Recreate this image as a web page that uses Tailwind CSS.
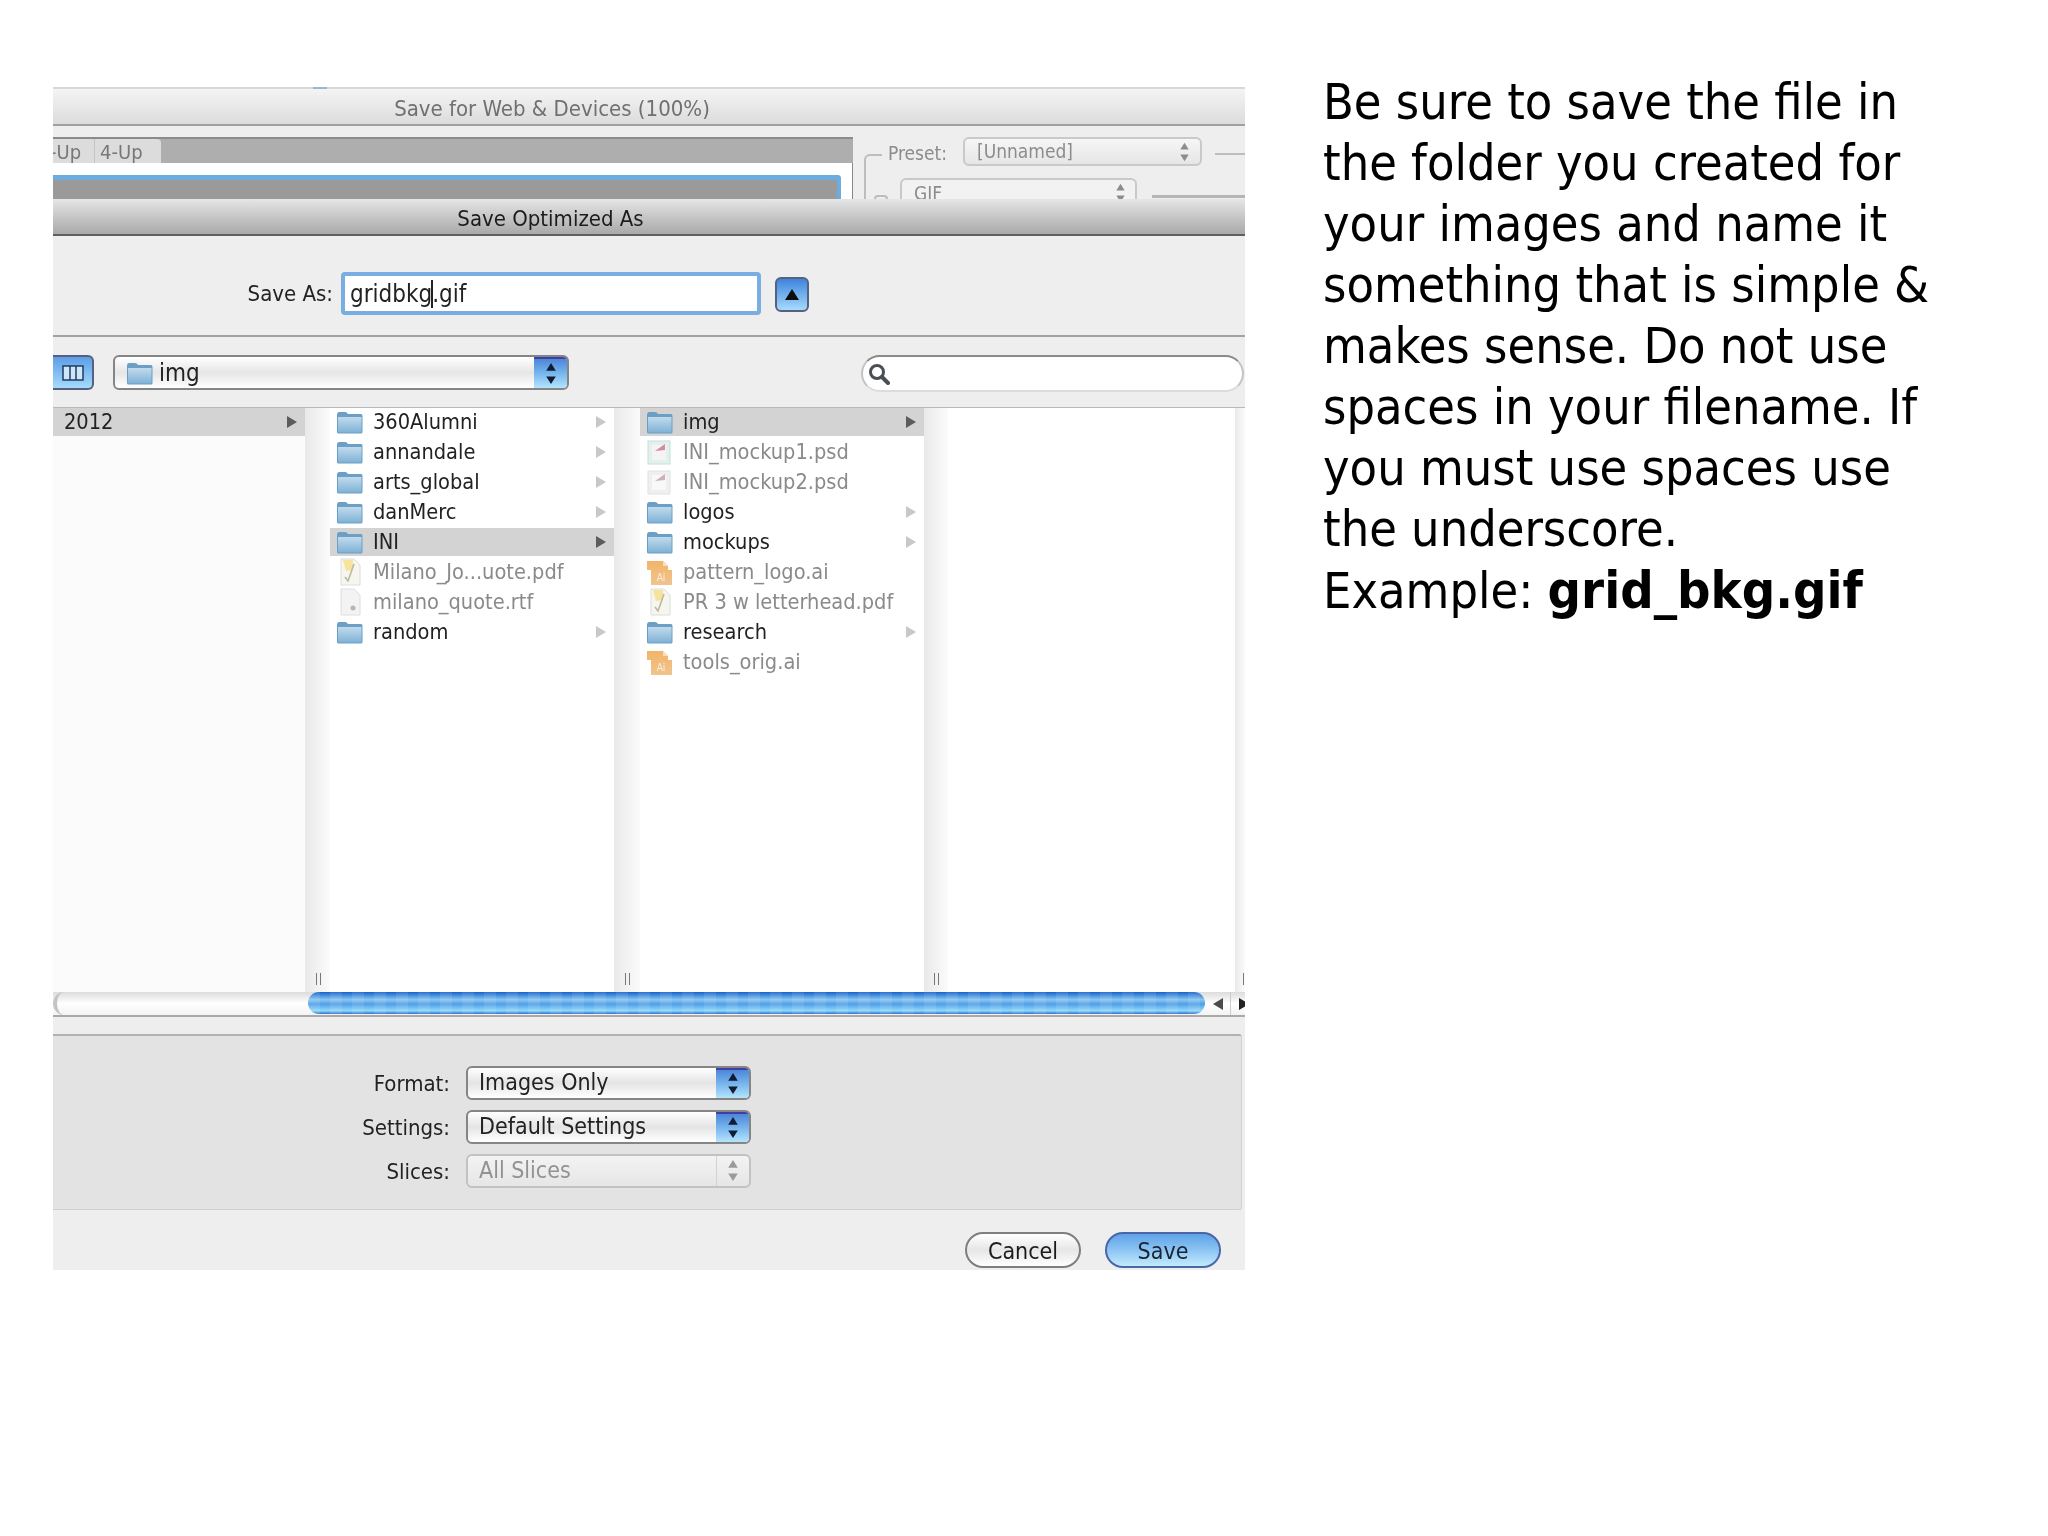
<!DOCTYPE html>
<html lang="en">
<head>
<meta charset="UTF-8" />
<title>Save Optimized As</title>
<script src="https://cdn.jsdelivr.net/npm/@tailwindcss/browser@4"></script>
</head>
<body class="bg-white m-0">

<!-- shared icons -->
<svg width="0" height="0" class="absolute">
  <defs>
    <linearGradient id="fold" x1="0" y1="0" x2="0" y2="1"><stop offset="0" stop-color="#c2dbec"/><stop offset="1" stop-color="#7fb2d6"/></linearGradient>
    <linearGradient id="orange" x1="0" y1="0" x2="0" y2="1"><stop offset="0" stop-color="#f3b469"/><stop offset="1" stop-color="#f0c48e"/></linearGradient>
    <symbol id="folder" viewBox="0 0 27 24">
      <path d="M1 4.500 Q1 2 3 2 H9 Q11 2 12 4 H25 Q26.500 4 26.500 6 V22 Q26.500 23.500 25 23.500 H2.500 Q1 23.500 1 22 Z" fill="#6b9fc6"/>
      <path d="M2 7 H25.500 V21.500 Q25.500 22.500 24.500 22.500 H3 Q2 22.500 2 21.500 Z" fill="url(#fold)"/>
    </symbol>
    <symbol id="ai" viewBox="0 0 27 28">
      <path d="M1 3 H17 L22 8 V12 H26 V27 H5 V12 H1 Z" fill="url(#orange)"/>
      <path d="M17 3 L22 8 H17 Z" fill="#f9dfbb"/>
      <text x="15" y="23" font-size="10" font-family="DejaVu Sans" fill="#fbeedd" text-anchor="middle">Ai</text>
    </symbol>
    <symbol id="pdf" viewBox="0 0 24 28">
      <path d="M3 1 H16 L22 7 V27 H3 Z" fill="#f6f5ee" stroke="#dddddd"/>
      <path d="M5 2 H15 V12 L8 13 Z" fill="#f6e39c"/>
      <path d="M16 6 L10 23 L7 19" fill="none" stroke="#b9b89a" stroke-width="1.500"/>
    </symbol>
    <symbol id="psd" viewBox="0 0 24 26">
      <rect x="1" y="2" width="22" height="23" fill="#e3f0ec" stroke="#c6e0d8"/>
      <rect x="5" y="6" width="14" height="15" fill="#f4f4f4"/>
      <path d="M8 12 L18 5 V11 Z" fill="#d98a9a"/>
    </symbol>
    <symbol id="psd2" viewBox="0 0 24 26">
      <rect x="1" y="2" width="22" height="23" fill="#efefef" stroke="#e2e2e2"/>
      <rect x="5" y="6" width="14" height="15" fill="#f8f8f8"/>
      <path d="M8 12 L18 5 V11 Z" fill="#cdb0b6"/>
    </symbol>
    <symbol id="rtf" viewBox="0 0 24 28">
      <path d="M3 1 H16 L22 7 V27 H3 Z" fill="#f3f3f3" stroke="#dedede"/>
      <circle cx="15" cy="20" r="2.500" fill="#b5b5b5"/>
    </symbol>
    <symbol id="steps" viewBox="0 0 12 24">
      <path d="M6 1 L11 9 H1 Z M6 23 L11 15 H1 Z" fill="currentColor"/>
    </symbol>
  </defs>
</svg>

<div class="flex items-start font-['DejaVu_Sans',sans-serif] font-stretch-condensed">

  <!-- dialog picture -->
  <div class="ml-[53px] mt-[87px] w-[1192px] h-[1183px] shrink-0 flex flex-col bg-[#eeeeef] text-[#222222] text-[22px] blur-[0.6px] overflow-hidden">

    <!-- window behind -->
    <div class="relative h-[39px] shrink-0 flex items-center justify-center pr-[194px] pt-[4px] bg-gradient-to-b from-[#f4f4f4] to-[#dcdcdc] border-t-2 border-b-2 border-t-[#d8d8d8] border-b-[#a0a0a0] text-[#707070]">
      <span class="absolute left-[260px] -top-[2px] w-[14px] h-[2px] bg-[#9db6cf]"></span>
      Save for Web &amp; Devices (100%)
    </div>
    <div class="h-[73px] shrink-0 flex bg-[#eeeeef] overflow-hidden">
      <div class="w-[800px] shrink-0 pt-[11px]">
        <div class="h-[26px] flex items-end bg-[#aeaeae] border-t-2 border-t-[#8b8b8b] text-[20px] leading-[27px] text-[#777777] overflow-hidden">
          <div class="h-[24px] pl-[0px] pr-[13px] -ml-[3px] border-r border-[#c4c4c4] bg-[#dcdcdc]">-Up</div>
          <div class="h-[24px] pl-[5px] pr-[18px] rounded-tr-sm bg-[#dcdcdc]">4-Up</div>
        </div>
        <div class="h-[36px] bg-white border-r border-[#888888] pt-[12px] pr-[11px]">
          <div class="h-[24px] bg-[#9a9a9a] border-t-[5px] border-r-[4px] border-[#6cacdf] rounded-tr-sm"></div>
        </div>
      </div>
      <div class="relative flex-1 text-[19px] text-[#8c8c8c]">
        <div class="absolute left-[11px] top-[28px] w-[18px] h-[46px] border-l-2 border-t-2 border-[#bdbdbd] rounded-tl-md"></div>
        <div class="absolute left-[35px] top-[13px]">Preset:</div>
        <div class="absolute left-[110px] top-[11px] w-[239px] h-[29px] flex items-center justify-between pl-[12px] pr-[10px] rounded-md border-2 border-[#c9c9c9] bg-gradient-to-b from-[#f6f6f6] to-[#e6e6e6]">
          <span>[Unnamed]</span><svg class="w-[11px] h-[20px]"><use href="#steps"/></svg>
        </div>
        <div class="absolute left-[362px] top-[27px] w-[31px] h-[2px] bg-[#bdbdbd]"></div>
        <div class="absolute left-[21px] top-[69px] w-[14px] h-[6px] rounded-t-sm border-t-2 border-x-2 border-[#bdbdbd]"></div>
        <div class="absolute left-[47px] top-[52px] w-[237px] h-[30px] flex items-center justify-between pl-[12px] pr-[9px] rounded-md border-2 border-[#c9c9c9] bg-[#f2f2f2]">
          <span>GIF</span><svg class="w-[11px] h-[20px]"><use href="#steps"/></svg>
        </div>
        <div class="absolute left-[299px] top-[69px] w-[94px] h-[3px] bg-[#b5b5b5]"></div>
      </div>
    </div>

    <!-- sheet title -->
    <div class="h-[37px] shrink-0 flex items-center justify-center pr-[197px] pt-[4px] bg-gradient-to-b from-[#e6e6e6] to-[#a9a9a9] border-b-2 border-[#5f5f5f] text-[#1c1c1c]">
      Save Optimized As
    </div>

    <!-- save as row -->
    <div class="h-[101px] shrink-0 flex items-start pt-[36px] border-b-2 border-[#a2a2a2]">
      <div class="w-[280px] h-[43px] flex items-center justify-end">Save As:</div>
      <div class="ml-[8px] w-[420px] h-[43px] flex items-center pl-[5px] text-[24px] bg-white border-[4px] border-[#78aee2] rounded-[4px]">
        <span>gridbkg</span><span class="w-[2px] h-[28px] -mx-px bg-[#222222]"></span><span>.gif</span>
      </div>
      <div class="ml-[14px] mt-[5px] w-[34px] h-[35px] flex items-center justify-center rounded-md border-2 border-[#55617f] bg-gradient-to-b from-[#3f83dc] to-[#a5dbfb]">
        <svg class="w-[14px] h-[11px]" viewBox="0 0 14 11"><path d="M7 0 L14 11 H0 Z" fill="#0d0d0d"/></svg>
      </div>
    </div>

    <!-- toolbar -->
    <div class="h-[70px] shrink-0 flex items-start pt-[18px]">
      <div class="w-[41px] h-[35px] flex items-center justify-center rounded-r-md border-y-2 border-r-2 border-[#55617f] bg-gradient-to-b from-[#5d9ee6] to-[#a5dbfb]">
        <svg class="w-[22px] h-[16px]" viewBox="0 0 22 16"><rect x="1" y="1" width="20" height="14" fill="#cfe6f8" stroke="#1f3c66" stroke-width="1.500"/><path d="M8 1 V15 M14 1 V15" stroke="#1f3c66" stroke-width="1.500"/></svg>
      </div>
      <div class="ml-[19px] w-[456px] h-[35px] flex rounded-md border-2 border-[#858585] overflow-hidden bg-gradient-to-b from-white via-[#e6e6e6] to-white text-[24px]">
        <div class="flex-1 flex items-center pl-[11px] gap-[6px]">
          <svg class="w-[27px] h-[24px]"><use href="#folder"/></svg><span>img</span>
        </div>
        <div class="w-[33px] flex items-center justify-center border-t-2 border-t-[#3f3fa6] bg-gradient-to-b from-[#4d86d8] via-[#78b6ee] to-[#b5e4fc] text-[#0f1c33]">
          <svg class="w-[12px] h-[23px]"><use href="#steps"/></svg>
        </div>
      </div>
      <div class="ml-[292px] w-[383px] h-[37px] flex items-center pl-[5px] rounded-full border-2 border-t-[#8a8a8a] border-x-[#c4c4c4] border-b-[#dcdcdc] bg-white">
        <svg class="w-[22px] h-[22px]" viewBox="0 0 22 22"><circle cx="9" cy="9" r="6.500" fill="none" stroke="#4a4f55" stroke-width="3"/><path d="M14 14 L20 20" stroke="#4a4f55" stroke-width="4" stroke-linecap="round"/></svg>
      </div>
    </div>

    <!-- column browser -->
    <div class="h-[585px] shrink-0 flex border-t border-[#b9b9b9] bg-white text-[21.6px]">
      <div class="w-[252px] shrink-0 bg-[#fbfbfb]">
        <div class="h-[28px] flex items-center justify-between pl-[11px] pr-[8px] bg-[#d3d3d3]">
          <span>2012</span><svg class="w-[10px] h-[12px]" viewBox="0 0 10 12"><path d="M0 0 L10 6 L0 12 Z" fill="#5c5c5c"/></svg>
        </div>
      </div>
      <div class="w-[25px] shrink-0 relative bg-gradient-to-r from-[#e9e9e9] to-[#fbfbfb]">
        <span class="absolute left-[11px] bottom-[7px] w-[5px] h-[12px] border-x border-[#777777]"></span>
      </div>

      <!-- second column -->
      <div class="w-[284px] shrink-0 flex flex-col">
        <div class="h-[28px] mb-[2px] flex items-center pl-[6px] pr-[8px]"><svg class="w-[27px] h-[24px] mr-[10px]"><use href="#folder"/></svg><span class="flex-1">360Alumni</span><svg class="w-[10px] h-[12px]" viewBox="0 0 10 12"><path d="M0 0 L10 6 L0 12 Z" fill="#c8c8c8"/></svg></div>
        <div class="h-[28px] mb-[2px] flex items-center pl-[6px] pr-[8px]"><svg class="w-[27px] h-[24px] mr-[10px]"><use href="#folder"/></svg><span class="flex-1">annandale</span><svg class="w-[10px] h-[12px]" viewBox="0 0 10 12"><path d="M0 0 L10 6 L0 12 Z" fill="#c8c8c8"/></svg></div>
        <div class="h-[28px] mb-[2px] flex items-center pl-[6px] pr-[8px]"><svg class="w-[27px] h-[24px] mr-[10px]"><use href="#folder"/></svg><span class="flex-1">arts_global</span><svg class="w-[10px] h-[12px]" viewBox="0 0 10 12"><path d="M0 0 L10 6 L0 12 Z" fill="#c8c8c8"/></svg></div>
        <div class="h-[28px] mb-[2px] flex items-center pl-[6px] pr-[8px]"><svg class="w-[27px] h-[24px] mr-[10px]"><use href="#folder"/></svg><span class="flex-1">danMerc</span><svg class="w-[10px] h-[12px]" viewBox="0 0 10 12"><path d="M0 0 L10 6 L0 12 Z" fill="#c8c8c8"/></svg></div>
        <div class="h-[28px] mb-[2px] flex items-center pl-[6px] pr-[8px] bg-[#d3d3d3]"><svg class="w-[27px] h-[24px] mr-[10px]"><use href="#folder"/></svg><span class="flex-1">INI</span><svg class="w-[10px] h-[12px]" viewBox="0 0 10 12"><path d="M0 0 L10 6 L0 12 Z" fill="#5c5c5c"/></svg></div>
        <div class="h-[28px] mb-[2px] flex items-center pl-[8px] pr-[8px] text-[#8a8a8a]"><svg class="w-[24px] h-[28px] mr-[11px]"><use href="#pdf"/></svg><span class="flex-1">Milano_Jo...uote.pdf</span></div>
        <div class="h-[28px] mb-[2px] flex items-center pl-[8px] pr-[8px] text-[#8a8a8a]"><svg class="w-[24px] h-[28px] mr-[11px]"><use href="#rtf"/></svg><span class="flex-1">milano_quote.rtf</span></div>
        <div class="h-[28px] mb-[2px] flex items-center pl-[6px] pr-[8px]"><svg class="w-[27px] h-[24px] mr-[10px]"><use href="#folder"/></svg><span class="flex-1">random</span><svg class="w-[10px] h-[12px]" viewBox="0 0 10 12"><path d="M0 0 L10 6 L0 12 Z" fill="#c8c8c8"/></svg></div>
      </div>
      <div class="w-[26px] shrink-0 relative bg-gradient-to-r from-[#e9e9e9] to-[#fbfbfb]">
        <span class="absolute left-[11px] bottom-[7px] w-[5px] h-[12px] border-x border-[#777777]"></span>
      </div>

      <!-- third column -->
      <div class="w-[284px] shrink-0 flex flex-col">
        <div class="h-[28px] mb-[2px] flex items-center pl-[6px] pr-[8px] bg-[#d3d3d3]"><svg class="w-[27px] h-[24px] mr-[10px]"><use href="#folder"/></svg><span class="flex-1">img</span><svg class="w-[10px] h-[12px]" viewBox="0 0 10 12"><path d="M0 0 L10 6 L0 12 Z" fill="#5c5c5c"/></svg></div>
        <div class="h-[28px] mb-[2px] flex items-center pl-[7px] pr-[8px] text-[#8a8a8a]"><svg class="w-[24px] h-[26px] mr-[12px]"><use href="#psd"/></svg><span class="flex-1">INI_mockup1.psd</span></div>
        <div class="h-[28px] mb-[2px] flex items-center pl-[7px] pr-[8px] text-[#8a8a8a]"><svg class="w-[24px] h-[26px] mr-[12px]"><use href="#psd2"/></svg><span class="flex-1">INI_mockup2.psd</span></div>
        <div class="h-[28px] mb-[2px] flex items-center pl-[6px] pr-[8px]"><svg class="w-[27px] h-[24px] mr-[10px]"><use href="#folder"/></svg><span class="flex-1">logos</span><svg class="w-[10px] h-[12px]" viewBox="0 0 10 12"><path d="M0 0 L10 6 L0 12 Z" fill="#c8c8c8"/></svg></div>
        <div class="h-[28px] mb-[2px] flex items-center pl-[6px] pr-[8px]"><svg class="w-[27px] h-[24px] mr-[10px]"><use href="#folder"/></svg><span class="flex-1">mockups</span><svg class="w-[10px] h-[12px]" viewBox="0 0 10 12"><path d="M0 0 L10 6 L0 12 Z" fill="#c8c8c8"/></svg></div>
        <div class="h-[28px] mb-[2px] flex items-center pl-[6px] pr-[8px] text-[#8a8a8a]"><svg class="w-[27px] h-[28px] mr-[10px]"><use href="#ai"/></svg><span class="flex-1">pattern_logo.ai</span></div>
        <div class="h-[28px] mb-[2px] flex items-center pl-[8px] pr-[8px] text-[#8a8a8a]"><svg class="w-[24px] h-[28px] mr-[11px]"><use href="#pdf"/></svg><span class="flex-1">PR 3 w letterhead.pdf</span></div>
        <div class="h-[28px] mb-[2px] flex items-center pl-[6px] pr-[8px]"><svg class="w-[27px] h-[24px] mr-[10px]"><use href="#folder"/></svg><span class="flex-1">research</span><svg class="w-[10px] h-[12px]" viewBox="0 0 10 12"><path d="M0 0 L10 6 L0 12 Z" fill="#c8c8c8"/></svg></div>
        <div class="h-[28px] mb-[2px] flex items-center pl-[6px] pr-[8px] text-[#8a8a8a]"><svg class="w-[27px] h-[28px] mr-[10px]"><use href="#ai"/></svg><span class="flex-1">tools_orig.ai</span></div>
      </div>
      <div class="w-[24px] shrink-0 relative bg-gradient-to-r from-[#e9e9e9] to-[#fbfbfb]">
        <span class="absolute left-[10px] bottom-[7px] w-[5px] h-[12px] border-x border-[#777777]"></span>
      </div>

      <div class="w-[287px] shrink-0"></div>
      <div class="w-[10px] shrink-0 relative bg-gradient-to-r from-[#e9e9e9] to-[#fbfbfb]">
        <span class="absolute left-[8px] bottom-[7px] w-[2px] h-[12px] border-l border-[#777777]"></span>
      </div>
    </div>

    <!-- horizontal scroller -->
    <div class="h-[25px] shrink-0 flex bg-gradient-to-b from-[#dcdcdc] via-white to-[#f3f3f3] border-b-2 border-[#a9a9a9]">
      <div class="w-[255px] shrink-0 rounded-l-full border-l-4 border-[#c4c4c4]"></div>
      <div class="w-[897px] shrink-0 h-[22px] rounded-full bg-[repeating-linear-gradient(90deg,#ffffff18_0,#ffffff18_12px,transparent_12px,transparent_22px),linear-gradient(to_bottom,#1f5fc4_0%,#3f8fe0_15%,#8cc6f0_35%,#4f9fe6_55%,#8fd8fb_85%,#2f6fc8_100%)]"></div>
      <div class="w-[26px] shrink-0 flex items-center justify-center border-r border-[#cccccc]">
        <svg class="w-[10px] h-[12px]" viewBox="0 0 10 12"><path d="M10 0 L0 6 L10 12 Z" fill="#4a4a4a"/></svg>
      </div>
      <div class="flex-1 flex items-center justify-end">
        <svg class="w-[6px] h-[12px]" viewBox="0 0 6 12"><path d="M0 0 L10 6 L0 12 Z" fill="#222222"/></svg>
      </div>
    </div>

    <!-- format options -->
    <div class="mt-[17px] h-[176px] w-[1189px] shrink-0 flex flex-col gap-[9px] pt-[29px] bg-[#e3e3e4] border-t-2 border-b border-r border-t-[#b2b2b2] border-b-[#cfcfcf] border-r-[#d2d2d2] rounded-r-[3px]">
      <div class="flex items-center">
        <div class="w-[397px] text-right pt-[2px]">Format:</div>
        <div class="ml-[16px] w-[285px] h-[34px] flex rounded-md border-2 border-[#858585] overflow-hidden bg-gradient-to-b from-white via-[#e4e4e4] to-white text-[23px]">
          <div class="flex-1 flex items-center pl-[11px]">Images Only</div>
          <div class="w-[33px] flex items-center justify-center border-t-2 border-t-[#3f3fa6] bg-gradient-to-b from-[#4d86d8] via-[#78b6ee] to-[#b5e4fc] text-[#0f1c33]">
            <svg class="w-[12px] h-[23px]"><use href="#steps"/></svg>
          </div>
        </div>
      </div>
      <div class="flex items-center">
        <div class="w-[397px] text-right pt-[2px]">Settings:</div>
        <div class="ml-[16px] w-[285px] h-[34px] flex rounded-md border-2 border-[#858585] overflow-hidden bg-gradient-to-b from-white via-[#e4e4e4] to-white text-[23px]">
          <div class="flex-1 flex items-center pl-[11px]">Default Settings</div>
          <div class="w-[33px] flex items-center justify-center border-t-2 border-t-[#3f3fa6] bg-gradient-to-b from-[#4d86d8] via-[#78b6ee] to-[#b5e4fc] text-[#0f1c33]">
            <svg class="w-[12px] h-[23px]"><use href="#steps"/></svg>
          </div>
        </div>
      </div>
      <div class="flex items-center">
        <div class="w-[397px] text-right pt-[2px]">Slices:</div>
        <div class="ml-[16px] w-[285px] h-[34px] flex rounded-md border-2 border-[#c2c2c2] overflow-hidden bg-gradient-to-b from-[#f3f3f3] to-[#e6e6e6] text-[#929292] text-[23px]">
          <div class="flex-1 flex items-center pl-[11px]">All Slices</div>
          <div class="w-[33px] flex items-center justify-center border-l border-[#d2d2d2] text-[#9a9a9a]">
            <svg class="w-[12px] h-[23px]"><use href="#steps"/></svg>
          </div>
        </div>
      </div>
    </div>

    <!-- buttons -->
    <div class="flex justify-end gap-[24px] pt-[22px] pr-[24px] text-[23px]">
      <div class="w-[116px] h-[36px] pt-[2px] flex items-center justify-center rounded-full border-2 border-[#7e7e7e] bg-gradient-to-b from-white via-[#e6e6e6] to-white text-[#1a1a1a]">Cancel</div>
      <div class="w-[116px] h-[36px] pt-[2px] flex items-center justify-center rounded-full border-2 border-[#4a66a8] bg-gradient-to-b from-[#5fa2e8] via-[#8cc4f2] to-[#c2ecfd] text-[#1a2433]">Save</div>
    </div>
  </div>

  <!-- slide text -->
  <div class="ml-[78px] mt-[72px] w-[640px] text-[50px] leading-[61px] text-black">
    Be sure to save the file in<br>
    the folder you created for<br>
    your images and name it<br>
    something that is simple &amp;<br>
    makes sense. Do not use<br>
    spaces in your filename. If<br>
    you must use spaces use<br>
    the underscore.<br>
    Example: <b class="font-bold text-[52px]">grid_bkg.gif</b>
  </div>
</div>

</body>
</html>
